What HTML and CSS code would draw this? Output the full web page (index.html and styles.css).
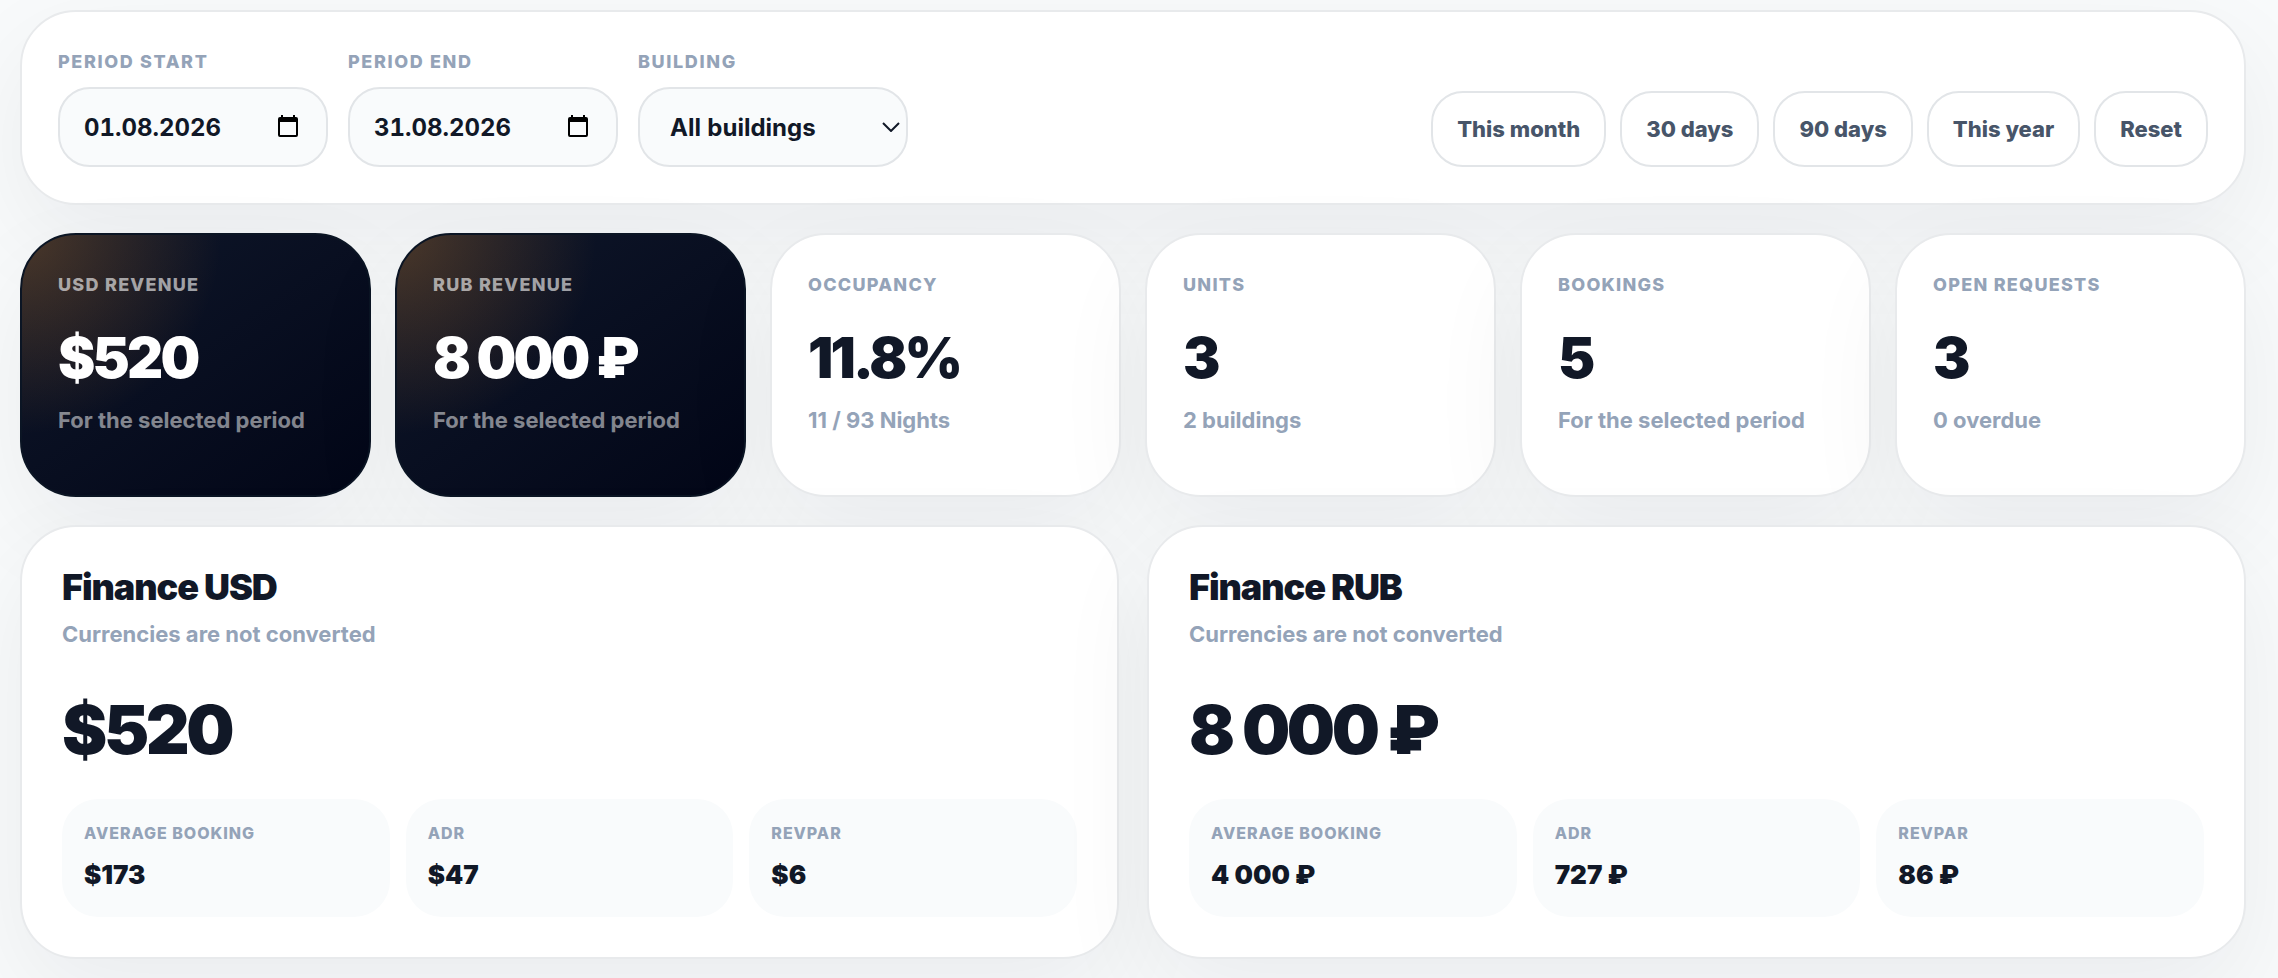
FILE: index.html
```html
<!DOCTYPE html>
<html lang="en">

	<head>
		<meta charset="utf-8" />
		<title>Reports</title>
		<link rel="stylesheet" href="styles.css">
	</head>

	<body>
		<main class="page">
			<form class="panel filters">
				<div class="field">
					<label for="start">Period start</label>
					<div class="control">
						<input type="text" id="start" value="01.08.2026" />
						<svg class="calendar" viewBox="0 0 20 22"><path d="M3 0h2v2h10V0h2v2h1a2 2 0 0 1 2 2v16a2 2 0 0 1-2 2H2a2 2 0 0 1-2-2V4a2 2 0 0 1 2-2h1zM2 7v13h16V7z" /></svg>
					</div>
				</div>
				<div class="field">
					<label for="end">Period end</label>
					<div class="control">
						<input type="text" id="end" value="31.08.2026" />
						<svg class="calendar" viewBox="0 0 20 22"><path d="M3 0h2v2h10V0h2v2h1a2 2 0 0 1 2 2v16a2 2 0 0 1-2 2H2a2 2 0 0 1-2-2V4a2 2 0 0 1 2-2h1zM2 7v13h16V7z" /></svg>
					</div>
				</div>
				<div class="field">
					<label for="building">Building</label>
					<div class="control">
						<select id="building">
							<option>All buildings</option>
						</select>
						<svg class="arrow" viewBox="0 0 18 10"><path d="M1 1l8 8 8-8" /></svg>
					</div>
				</div>
				<div class="presets">
					<button type="button">This month</button>
					<button type="button">30 days</button>
					<button type="button">90 days</button>
					<button type="button">This year</button>
					<button type="reset">Reset</button>
				</div>
			</form>

			<section class="kpis">
				<div class="panel kpi dark">
					<div class="kpi-label">USD revenue</div>
					<div class="kpi-value">$520</div>
					<div class="kpi-note">For the selected period</div>
				</div>
				<div class="panel kpi dark">
					<div class="kpi-label">RUB revenue</div>
					<div class="kpi-value">8&nbsp;000&nbsp;₽</div>
					<div class="kpi-note">For the selected period</div>
				</div>
				<div class="panel kpi">
					<div class="kpi-label">Occupancy</div>
					<div class="kpi-value">11.8%</div>
					<div class="kpi-note">11 / 93 Nights</div>
				</div>
				<div class="panel kpi">
					<div class="kpi-label">Units</div>
					<div class="kpi-value">3</div>
					<div class="kpi-note">2 buildings</div>
				</div>
				<div class="panel kpi">
					<div class="kpi-label">Bookings</div>
					<div class="kpi-value">5</div>
					<div class="kpi-note">For the selected period</div>
				</div>
				<div class="panel kpi">
					<div class="kpi-label">Open requests</div>
					<div class="kpi-value">3</div>
					<div class="kpi-note">0 overdue</div>
				</div>
			</section>

			<section class="finance">
				<div class="panel card">
					<h2>Finance USD</h2>
					<p>Currencies are not converted</p>
					<div class="total">$520</div>
					<div class="stats">
						<div class="stat"><span>Average booking</span><strong>$173</strong></div>
						<div class="stat"><span>ADR</span><strong>$47</strong></div>
						<div class="stat"><span>RevPAR</span><strong>$6</strong></div>
					</div>
				</div>
				<div class="panel card">
					<h2>Finance RUB</h2>
					<p>Currencies are not converted</p>
					<div class="total">8&nbsp;000&nbsp;₽</div>
					<div class="stats">
						<div class="stat"><span>Average booking</span><strong>4&nbsp;000&nbsp;₽</strong></div>
						<div class="stat"><span>ADR</span><strong>727&nbsp;₽</strong></div>
						<div class="stat"><span>RevPAR</span><strong>86&nbsp;₽</strong></div>
					</div>
				</div>
			</section>
		</main>
	</body>

</html>
```

FILE: styles.css
```css
* {
	box-sizing: border-box;
	margin: 0;
	padding: 0;
}

body {
	font-family: Inter, "Liberation Sans", sans-serif;
	color: #111827;
	background: #f8fafb;
}

.page {
	display: flex;
	flex-direction: column;
	gap: 28px;
	padding: 10px 32px 20px 20px;
}

.panel {
	background: #fff;
	border: 2px solid #e8eaec;
	border-radius: 56px;
	box-shadow: 0 36px 100px rgba(15, 23, 32, 0.06);
}

/* filters */
.filters {
	display: flex;
	align-items: flex-end;
	gap: 20px;
	padding: 36px;
}

.field {
	width: 270px;
}

.field label {
	display: block;
	margin-bottom: 12px;
	font-size: 18px;
	line-height: 27px;
	font-weight: 850;
	letter-spacing: 0.09em;
	text-transform: uppercase;
	color: #94a3b8;
}

.control {
	position: relative;
}

.control input,
.control select {
	display: block;
	width: 100%;
	height: 80px;
	padding: 0 24px;
	border: 2px solid #e2e5e8;
	border-radius: 32px;
	background: #f9fbfc;
	color: #111827;
	font-family: inherit;
	font-size: 24px;
	font-weight: 700;
	font-variant-numeric: tabular-nums;
	outline: none;
}

.control select {
	padding: 0 30px;
	appearance: none;
}

.control svg {
	position: absolute;
	pointer-events: none;
}

.calendar {
	top: 28px;
	right: 30px;
	width: 20px;
	height: 22px;
	fill: #000;
	fill-rule: evenodd;
}

.arrow {
	top: 35px;
	right: 8px;
	width: 18px;
	height: 10px;
	fill: none;
	stroke: #111827;
	stroke-width: 2;
}

.presets {
	display: flex;
	gap: 14px;
	margin-left: auto;
}

.presets button {
	height: 76px;
	padding: 0 24px;
	border: 2px solid #e2e5e8;
	border-radius: 32px;
	background: #fff;
	color: #475569;
	font-family: inherit;
	font-size: 22px;
	font-weight: 850;
	cursor: pointer;
}

/* key figures */
.kpis {
	display: grid;
	grid-template-columns: repeat(6, 1fr);
	gap: 24px;
}

.kpi {
	min-height: 264px;
	padding: 36px;
}

.kpi-label {
	font-size: 18px;
	line-height: 27px;
	font-weight: 850;
	letter-spacing: 0.07em;
	text-transform: uppercase;
	color: #94a3b8;
}

.kpi-value {
	margin-top: 32px;
	font-size: 56px;
	line-height: 56px;
	font-weight: 900;
	letter-spacing: -0.05em;
}

.kpi-note {
	margin-top: 18px;
	font-size: 22px;
	line-height: 33px;
	font-weight: 650;
	color: #94a3b8;
}

.dark {
	border-color: #0b1524;
	background: radial-gradient(circle at 0 0, rgba(250, 152, 40, 0.25), transparent 46%), linear-gradient(145deg, #0f172a, #020617);
	color: #fff;
}

.dark .kpi-label {
	color: rgba(255, 255, 255, 0.6);
}

.dark .kpi-note {
	color: rgba(255, 255, 255, 0.5);
}

/* finance cards */
.finance {
	display: grid;
	grid-template-columns: 1fr 1fr;
	gap: 28px;
}

.card {
	padding: 40px;
}

.card h2 {
	font-size: 36px;
	line-height: 40px;
	font-weight: 900;
	letter-spacing: -0.03em;
}

.card p {
	margin-top: 10px;
	font-size: 22px;
	line-height: 34px;
	font-weight: 650;
	color: #94a3b8;
}

.total {
	margin-top: 44px;
	font-size: 68px;
	line-height: 68px;
	font-weight: 900;
	letter-spacing: -0.05em;
}

.stats {
	display: grid;
	grid-template-columns: repeat(3, 1fr);
	gap: 16px;
	margin-top: 36px;
}

.stat {
	padding: 23px 22px;
	border-radius: 36px;
	background: #f9fbfc;
}

.stat span {
	display: block;
	font-size: 16px;
	line-height: 22px;
	font-weight: 850;
	letter-spacing: 0.06em;
	text-transform: uppercase;
	color: #94a3b8;
}

.stat strong {
	display: block;
	margin-top: 12px;
	font-size: 26px;
	line-height: 38px;
	font-weight: 900;
}
```
